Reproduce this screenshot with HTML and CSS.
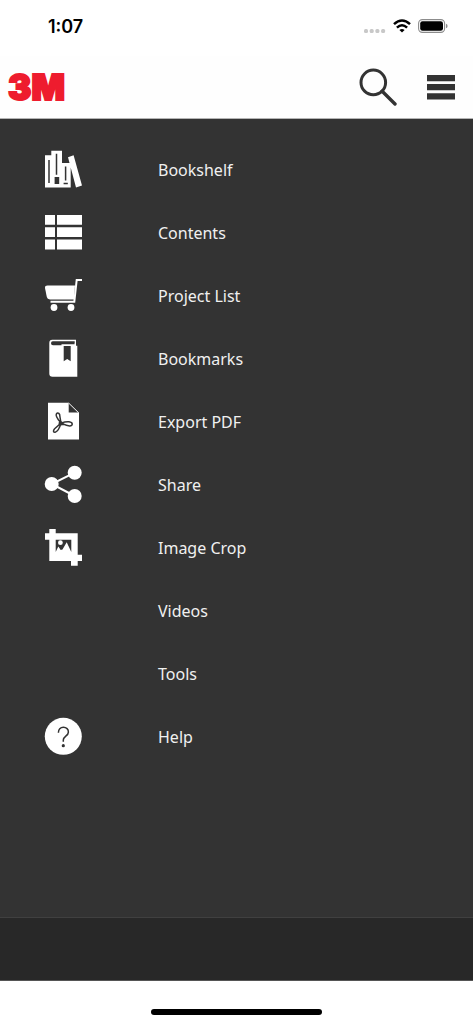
FILE: index.html
```html
<!DOCTYPE html>
<html lang="en">
<head>
<meta charset="utf-8">
<meta name="viewport" content="width=device-width, initial-scale=1">
<title>3M Menu</title>
<link rel="stylesheet" href="styles.css">
</head>
<body>
<div class="screen">
  <div class="status">
    <span class="time">1:07</span>
    <div class="indicators">
      <svg width="22" height="16" viewBox="0 0 22 16" fill="#c8c8c8"><rect x="0" y="11" width="4" height="4" rx="1.5"/><rect x="5.7" y="11" width="4" height="4" rx="1.5"/><rect x="11.4" y="11" width="4" height="4" rx="1.5"/><rect x="17.1" y="11" width="4" height="4" rx="1.5"/></svg>
      <svg width="18" height="14" viewBox="0 0 18 14" fill="none" stroke="#000" stroke-width="2.5"><path d="M1 5.2Q9-2.3 17 5.2"/><path d="M3.9 8.7Q9 3.9 14.1 8.7"/><path d="M6.4 11Q9 8.9 11.6 11L9 13.6Z" fill="#000" stroke="none"/></svg>
      <svg width="30" height="14" viewBox="0 0 30 14"><rect x=".6" y=".6" width="26" height="12.8" rx="3.8" fill="none" stroke="#8c8c8c" stroke-width="1.1"/><rect x="2.2" y="2.2" width="22.8" height="9.6" rx="2.3"/><path d="M28 4.7q1.6.6 1.6 2.3T28 9.3z" fill="#8c8c8c"/></svg>
    </div>
  </div>
  <header class="bar">
    <a class="logo" href="#">3M</a>
    <div class="actions">
      <button class="action" type="button" aria-label="Search"><svg width="38" height="38" viewBox="0 0 38 38" fill="none" stroke="#333" stroke-width="3"><circle cx="14.3" cy="14.4" r="12.3"/><path d="M23.2 23.3 36 36" stroke-width="3.4" stroke-linecap="round"/></svg></button>
      <button class="action" type="button" aria-label="Menu"><svg width="28" height="26" viewBox="0 0 28 26" fill="#333"><path d="M0 1h28v6.3H0zM0 10h28v6.3H0zM0 19.2h28v6.3H0z"/></svg></button>
    </div>
  </header>
  <nav class="menu">
    <a class="item" href="#"><svg class="icon" viewBox="0 0 38 38"><path d="M1 5.2h6.3V.7H18V13h8.7v24.5H1zM24 7.2l5.6-1.9L38 35.6l-6 1.9z"/><path class="ink" d="M5 10v23M12.5 3.8v21M21.6 16.5v14M19.6 33.5h4.2"/><path class="cut" d="M10.6 27h4.6v7h-4.6z"/></svg><span class="label">Bookshelf</span></a>
    <a class="item" href="#"><svg class="icon" viewBox="0 0 38 38"><path d="M1 2h10v9.8H1zM13 2h25v9.8H13zM1 14.3h10V24H1zM13 14.3h25V24H13zM1 26.5h10v10H1zM13 26.5h25v10H13z"/></svg><span class="label">Contents</span></a>
    <a class="item" href="#"><svg class="icon" viewBox="0 0 38 38"><path d="M3.5 9.6H31L30 23.4H6Q3.3 23.4 2.8 21L1 12Q.9 9.6 3.5 9.6z"/><path class="line" d="M38 4h-5.3L30.3 25.8H6.5"/><circle cx="10" cy="31.5" r="3.4"/><circle cx="27" cy="31.5" r="3.4"/></svg><span class="label">Project List</span></a>
    <a class="item" href="#"><svg class="icon" viewBox="0 0 38 38"><path d="M8.3.8H32v5.9h1.3v31H8.5q-3.2 0-3.2-3.2V4Q5.3.8 8.3.8z"/><path class="cut" d="M8.8 2.3h21.9v2H17.5v2H9Q7 6.2 7 4.3t1.8-2zM19.7 7h7v15.3L23.2 20l-3.5 2.3zM17.5 4.3h13v1h-13z"/></svg><span class="label">Bookmarks</span></a>
    <a class="item" href="#"><svg class="icon" viewBox="0 0 38 38"><path d="M4 .8h20.7v9.7H35v27H4z"/><path d="M24.7 1.1 34.7 10.8" fill="none" stroke="#fff"/><path class="pdf" d="M17 21.1C13.8 17.5 11.4 13.3 12.5 11.7c1.5-1.8 3.5.1 3.4 2.8L17 21.1Q22 19.4 25 19.8c4.3.6 4.1 4.1.7 4.1-3.4 0-5.9-1.5-8.7-2.8-1.2 4.3-3.2 8-5.5 9-2.2.7-2.7-1.3-.9-3.4zM15.8 18.6l-.7 4.4 4.8-.8z"/></svg><span class="label">Export PDF</span></a>
    <a class="item" href="#"><svg class="icon" viewBox="0 0 38 38"><path class="line" d="M30.7 7.7 7.7 19l23 12"/><circle cx="7.7" cy="19" r="7"/><circle cx="30.7" cy="7.7" r="7"/><circle cx="30.7" cy="31" r="7"/></svg><span class="label">Share</span></a>
    <a class="item" href="#"><svg class="icon" viewBox="0 0 38 38"><path d="M5.3 1h6.4v4.3h22v21.4H38V33h-4.3v4.7H27V33H5.3V11.7H1V5.3h4.3z"/><path class="cut" d="M11.7 11.7h15.6V24L22.7 14.3 18.5 21.5l-1.8.6-2.4-3.7L11.7 24z"/><circle cx="16.4" cy="14.7" r="2.4"/></svg><span class="label">Image Crop</span></a>
    <a class="item" href="#"><span class="icon"></span><span class="label">Videos</span></a>
    <a class="item" href="#"><span class="icon"></span><span class="label">Tools</span></a>
    <a class="item" href="#"><svg class="icon" viewBox="0 0 38 38"><circle cx="19.3" cy="19.3" r="18.5"/><path class="ink" d="M14.4 15.8c-.1-3.5 2-5.5 5-5.5s5.1 2 5 4.8c-.1 4-5.1 4.2-5.1 8v1.7"/><circle class="cut" cx="19.3" cy="28.7" r="1.6"/></svg><span class="label">Help</span></a>
  </nav>
  <footer class="footer"></footer>
  <div class="home"><div class="handle"></div></div>
</div>
</body>
</html>
```
FILE: styles.css
```css
* { box-sizing: border-box; }
body { margin: 0; background: #fff; font-family: "Noto Sans", "Open Sans", sans-serif; }
.screen { min-height: 100vh; display: flex; flex-direction: column; }
.status {
  height: 56px;
  padding: 0 25px 4px 48px;
  display: flex;
  align-items: center;
  justify-content: space-between;
}
.time { padding-top: 2px; font: 600 18px/24px Inter, sans-serif; color: #000; }
.indicators { display: flex; align-items: center; gap: 7px; }
.bar {
  height: 63px;
  padding: 0 18px 0 8px;
  display: flex;
  align-items: center;
  justify-content: space-between;
  background: #fefefe;
  border-bottom: 1px solid #b4b4b4;
}
.logo {
  font: 900 35px/40px Inter, sans-serif;
  color: #ee1c2e;
  -webkit-text-stroke: 2px #ee1c2e;
  text-decoration: none;
}
.actions { display: flex; align-items: center; gap: 30px; }
.action { display: flex; padding: 0; border: 0; background: none; }
.menu { flex: 1; padding: 18px 0 20px; background: #333; }
.item {
  height: 63px;
  padding-left: 44px;
  display: flex;
  align-items: center;
  gap: 76px;
  color: #f0f0f0;
  font-size: 16px;
  line-height: 24px;
  text-decoration: none;
}
.label { padding-top: 2px; }
.icon { width: 38px; height: 38px; flex: none; fill: #fff; }
.cut { fill: #333; }
.ink { fill: none; stroke: #333; stroke-width: 1.5; }
.line { fill: none; stroke: #fff; stroke-width: 2; }
.pdf { fill: none; stroke: #333; stroke-width: 1.5; stroke-linejoin: round; }
.footer { height: 64px; background: #282828; border-top: 1px solid #404040; border-bottom: 1px solid #555; }
.home { height: 43px; padding-bottom: 9px; display: flex; align-items: flex-end; justify-content: center; }
.handle { width: 36%; height: 6px; border-radius: 3px; background: #000; }
```
